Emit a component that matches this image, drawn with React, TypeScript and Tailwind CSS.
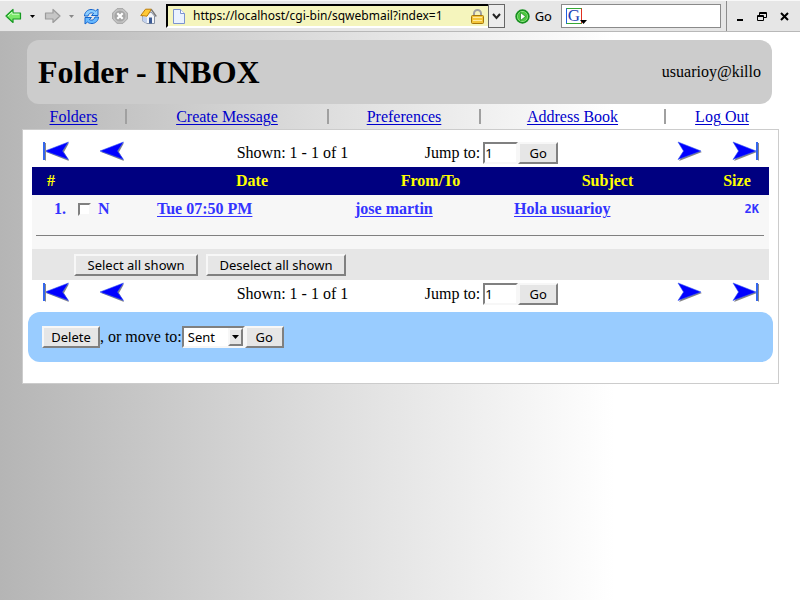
import React from "react";

const sans = "font-['Noto_Sans','Open_Sans',sans-serif] text-[13px] leading-[18px]";
const raised =
  "h-[22px] border-2 border-t-[#f7f7f7] border-l-[#f7f7f7] border-r-[#808080] border-b-[#808080] bg-[#e6e6e6] text-black whitespace-nowrap";
const sunken =
  "h-[22px] border-2 border-t-[#808080] border-l-[#808080] border-r-[#f7f7f7] border-b-[#f7f7f7] bg-white text-black";

function ArrowIcon({ back, stop }: { back?: boolean; stop?: boolean }) {
  const barX = back ? 2 : 25;
  return (
    <svg
      width={stop ? 28 : 26}
      height="21"
      viewBox={stop ? "0 0 28 21" : "0 0 26 21"}
      aria-hidden="true"
    >
      {back ? (
        <g transform={stop ? "translate(2 0)" : undefined}>
          <path d="M25 2 L2 11 L25 20 L20 11 Z" fill="#666666" opacity="0.8" />
          <path d="M24.5 1 L1 10 L24.5 18.5 L18.5 10 Z" fill="#0000ff" stroke="#3c5cf0" strokeWidth="0.6" />
        </g>
      ) : (
        <>
          <path d="M2 2 L25 11 L2 20 L8 11 Z" fill="#666666" opacity="0.8" />
          <path d="M1 1 L24 10 L1 18.5 L6.5 10 Z" fill="#0000ff" stroke="#3c5cf0" strokeWidth="0.6" />
        </>
      )}
      {stop && <path d={`M${barX} 1V19`} stroke="#3366ee" strokeWidth="2" />}
      {stop && <path d={`M${barX + 1.5} 2V19.5`} stroke="#888888" strokeWidth="1" />}
    </svg>
  );
}

function Pager({ id }: { id: string }) {
  return (
    <nav className="mx-[9px] grid h-[26px] grid-cols-[161px_1fr_1fr_178px]" aria-label={`Pages ${id}`}>
      <div className="flex items-start gap-[29px] pl-[10px]">
        <a href="#first" aria-label="First page"><ArrowIcon back stop /></a>
        <a href="#previous" aria-label="Previous page"><ArrowIcon back /></a>
      </div>
      <p className="text-center leading-6">Shown: 1 - 1 of 1</p>
      <form className="flex h-6 items-center justify-center" onSubmit={(e) => e.preventDefault()}>
        <label htmlFor={`jump-${id}`} className="mr-[3px] whitespace-nowrap">Jump to:</label>
        <input id={`jump-${id}`} defaultValue="1" className={`${sans} ${sunken} w-[35px]`} />
        <button type="submit" className={`${sans} ${raised} w-10`}>Go</button>
      </form>
      <div className="flex items-start justify-end gap-[29px] pr-[9px]">
        <a href="#next" aria-label="Next page"><ArrowIcon /></a>
        <a href="#last" aria-label="Last page"><ArrowIcon stop /></a>
      </div>
    </nav>
  );
}

function Caret({ color }: { color: string }) {
  return (
    <svg width="5" height="3" viewBox="0 0 5 3" aria-hidden="true">
      <path d="M0 0H5L2.5 3Z" fill={color} />
    </svg>
  );
}

function Toolbar() {
  return (
    <header className={`${sans} flex h-8 items-center border-t border-b border-t-[#f8f8f8] border-b-[#b8b8b8] bg-[#e6e6e6] pl-[5px] text-black`}>
      <button aria-label="Back" className="w-[18px]">
        <svg width="17" height="16" viewBox="0 0 17 16">
          <path d="M1 8 8 1.5V5H15.5V11H8V14.5Z" fill="#7be86a" stroke="#169a22" strokeWidth="1.2" strokeLinejoin="round" />
          <path d="M3 8 7 4.2V6.2H14.2" fill="none" stroke="#d2ffc8" />
        </svg>
      </button>
      <button aria-label="Back history" className="ml-[7px] w-[6px]"><Caret color="#000" /></button>
      <button aria-label="Forward" className="ml-[8px] w-[18px]">
        <svg width="17" height="16" viewBox="0 0 17 16">
          <path d="M16 8 9 1.5V5H1.5V11H9V14.5Z" fill="#c6c6c6" stroke="#9b9b9b" strokeWidth="1.2" strokeLinejoin="round" />
        </svg>
      </button>
      <button aria-label="Forward history" className="ml-[7px] w-[6px]"><Caret color="#888" /></button>
      <button aria-label="Reload" className="ml-[8px] w-[17px]">
        <svg width="17" height="17" viewBox="0 0 17 17">
          <path d="M1.5 8C1.5 4.5 4.5 1.5 8 1.5 10 1.5 11.5 2 12.5 3L15 1V7.5H8.5L10.7 5.4C8 4.2 6 5 5 8Z" fill="#8accff" stroke="#1464cc" strokeLinejoin="round" />
          <path d="M15.5 9C15.5 12.5 12.5 15.5 9 15.5 7 15.5 5.5 15 4.5 14L2 16V9.5H8.5L6.3 11.6C9 12.8 11 12 12 9Z" fill="#66b8ff" stroke="#1464cc" strokeLinejoin="round" />
        </svg>
      </button>
      <button aria-label="Stop" className="ml-[12px] w-4">
        <svg width="16" height="16" viewBox="0 0 16 16">
          <path d="M5 .7H11L15.3 5V11L11 15.3H5L.7 11V5Z" fill="#c4c4c4" stroke="#a0a0a0" />
          <circle cx="8" cy="8" r="5.6" fill="#a6a6a6" />
          <path d="M5.3 5.3 10.7 10.7M10.7 5.3 5.3 10.7" stroke="#fff" strokeWidth="2.2" />
        </svg>
      </button>
      <button aria-label="Home" className="ml-[12px] w-[17px]">
        <svg width="17" height="17" viewBox="0 0 17 17">
          <path d="M2.5 8V13L7 15.5H14.5V8L11 4Z" fill="#f4f6fa" stroke="#8792a4" />
          <path d="M2.5 8.5 7 9.5V15.5L2.5 13Z" fill="#c3d2ee" />
          <path d="M.8 7.5 5.5 1.2H11.5L7 8.2Z" fill="#ffc936" stroke="#bb7c0c" strokeLinejoin="round" />
          <path d="M11.3 1.5 16.3 8.5" stroke="#777" strokeWidth="1.3" />
          <rect x="9" y="9.5" width="3" height="6" fill="#3d5c96" />
        </svg>
      </button>

      <div className="ml-[9px] flex h-6 min-w-0 flex-1 items-center border-2 border-r-0 border-t-black border-b-white border-l-black bg-[#f5f5bd] pl-[5px]">
        <svg width="12" height="15" viewBox="0 0 12 15" className="shrink-0" aria-hidden="true">
          <path d="M.5.5H7.5L11.5 4.5V14.5H.5Z" fill="#eaf2ff" stroke="#7b93d0" />
          <path d="M7.5.5V4.5H11.5" fill="#fff" stroke="#7b93d0" />
        </svg>
        <input
          aria-label="Address"
          defaultValue="https://localhost/cgi-bin/sqwebmail?index=1"
          className="ml-[8px] min-w-0 flex-1 bg-transparent text-[12px]"
        />
        <svg width="13" height="15" viewBox="0 0 13 15" className="mr-[4px] shrink-0" aria-hidden="true">
          <path d="M3 7V4.5A3.5 3.5 0 0 1 10 4.5V7" fill="none" stroke="#a0a0a0" strokeWidth="2" />
          <rect x=".5" y="6.5" width="12" height="8" rx="1" fill="#f4c63a" stroke="#a87808" />
          <path d="M2 8.5H11M2 11.5H11" stroke="#ffeaa0" />
        </svg>
      </div>
      <button aria-label="Address history" className="flex h-6 w-[17px] items-center justify-center border border-[#666] bg-[#ececec]">
        <svg width="9" height="7" viewBox="0 0 9 7"><path d="M1 1 4.5 5 8 1" fill="none" stroke="#222" strokeWidth="2" /></svg>
      </button>
      <button className="ml-[10px] flex items-center gap-[5px]">
        <svg width="15" height="15" viewBox="0 0 15 15" aria-hidden="true">
          <circle cx="7.5" cy="7.5" r="6.3" fill="#a8ee98" stroke="#189020" strokeWidth="1.8" />
          <circle cx="7.5" cy="7.5" r="4.8" fill="#4cc840" />
          <path d="M5.5 3.5 10.5 7.5 5.5 11.5Z" fill="#fff" stroke="#12801a" strokeWidth=".7" />
        </svg>
        Go
      </button>
      <div className="ml-[9px] flex h-6 w-40 items-center border border-[#8a8a8a] bg-white pl-[4px]">
        <span className="flex size-4 shrink-0 items-center justify-center border border-t-[#35a835] border-r-[#e03020] border-b-[#35a835] border-l-[#2060e0] font-['Liberation_Serif',serif] text-[17px] leading-4 text-[#1a3fb4]">G</span>
        <span className="-ml-[2px] mt-3"><svg width="7" height="4" viewBox="0 0 7 4" aria-hidden="true"><path d="M0 0H7L3.5 4Z" /></svg></span>
        <input aria-label="Search" className="min-w-0 flex-1 bg-transparent" />
      </div>
      <div className="ml-[5px] flex h-[30px] items-center border-l border-[#8c8c8c] pl-[9px] pr-[11px]">
        <button aria-label="Minimize"><svg width="9" height="11" viewBox="0 0 9 11"><path d="M1 9H7" stroke="#000" strokeWidth="2" /></svg></button>
        <button aria-label="Restore" className="ml-[12px]">
          <svg width="10" height="9" viewBox="0 0 10 9"><path d="M2.5 3V.5H9.5V5.5H7M2.5 1.5H9.5M.5 3.5H6.5V8.5H.5ZM.5 4.5H6.5" fill="none" stroke="#000" /></svg>
        </button>
        <button aria-label="Close" className="ml-[13px]"><svg width="9" height="9" viewBox="0 0 9 9"><path d="M1 1 8 8M8 1 1 8" stroke="#000" strokeWidth="2" /></svg></button>
      </div>
    </header>
  );
}

const navLink = "text-[#0000cc] underline underline-offset-2";
const divided = "border-l-2 border-[#a0a0a0]";
const mailLink = "underline underline-offset-2";

export default function App() {
  return (
    <div className="min-h-screen bg-white bg-[linear-gradient(90deg,#b5b5b5_0px,#dedede_330px,#ffffff_615px)] font-['Liberation_Serif',serif] text-base leading-5 text-black">
      <Toolbar />
      <main className="mx-[22px] pt-2">
        <div className="ml-[5px] mr-[6px] flex h-16 items-center justify-between rounded-xl bg-[#cccccc] px-[11px]">
          <h1 className="pb-px text-[32px] leading-10 font-bold">Folder - INBOX</h1>
          <p>usuarioy@killo</p>
        </div>
        <nav className="grid h-[25px] grid-cols-[103fr_202fr_152fr_185fr_114fr] items-center text-center leading-[15px]">
          <div><a href="#folders" className={navLink}>Folders</a></div>
          <div className={divided}><a href="#create" className={navLink}>Create Message</a></div>
          <div className={divided}><a href="#preferences" className={navLink}>Preferences</a></div>
          <div className={divided}><a href="#addresses" className={navLink}>Address Book</a></div>
          <div className={divided}><a href="#logout" className={navLink}>Log Out</a></div>
        </nav>

        <section className="-mr-px border border-[#cccccc] bg-white pt-[11px] pb-[21px]">
          <Pager id="top" />
          <div className="mx-[9px]">
            <table className="w-full table-fixed border-collapse font-bold">
              <colgroup>
                <col className="w-[38px]" />
                <col className="w-[83px]" />
                <col className="w-[198px]" />
                <col className="w-[159px]" />
                <col />
                <col className="w-16" />
              </colgroup>
              <thead>
                <tr className="h-7 bg-[#000080] text-[#ffff00]">
                  <th>#</th>
                  <th aria-label="Status" />
                  <th>Date</th>
                  <th>From/To</th>
                  <th>Subject</th>
                  <th>Size</th>
                </tr>
              </thead>
              <tbody className="bg-[#f7f7f7] text-[#3333ff]">
                <tr className="h-7">
                  <td className="pr-1 text-right">1.</td>
                  <td className="pl-2">
                    <label className="flex items-center gap-[7px]">
                      <input type="checkbox" className="size-[13px] appearance-none border-2 border-t-[#808080] border-r-[#f7f7f7] border-b-[#f7f7f7] border-l-[#808080] bg-white" />
                      N
                    </label>
                  </td>
                  <td className="pl-1"><a href="#message" className={mailLink}>Tue 07:50 PM</a></td>
                  <td className="pl-1"><a href="#message" className={mailLink}>jose martin</a></td>
                  <td className="pl-1"><a href="#message" className={mailLink}>Hola usuarioy</a></td>
                  <td className="pr-[10px] text-right font-['DejaVu_Sans_Mono',monospace] text-[12px]">2K</td>
                </tr>
                <tr className="h-[26px]">
                  <td colSpan={6} className="px-1 pb-[2px]">
                    <hr className="mr-px border-t border-[#808080]" />
                  </td>
                </tr>
              </tbody>
            </table>
            <div className="flex h-[31px] items-center gap-[8px] bg-[#e6e6e6] pl-[42px]">
              <button className={`${sans} ${raised} w-[124px]`}>Select all shown</button>
              <button className={`${sans} ${raised} w-[140px]`}>Deselect all shown</button>
            </div>
          </div>
          <div className="pt-[2px]">
            <Pager id="bottom" />
          </div>
          <form className="mt-1 ml-[5px] mr-[5px] flex h-[50px] items-center rounded-xl bg-[#99ccff] pl-[14px]" onSubmit={(e) => e.preventDefault()}>
            <button type="button" className={`${sans} ${raised} w-[58px]`}>Delete</button>
            <label htmlFor="target" className="whitespace-nowrap">, or move to:</label>
            <span className={`${sunken} grid w-[63px] items-center bg-white`}>
              <select id="target" className={`${sans} col-start-1 row-start-1 appearance-none pl-1`}>
                <option>Sent</option>
              </select>
              <span className="pointer-events-none col-start-1 row-start-1 flex h-[18px] w-[15px] items-center justify-center justify-self-end border-2 border-t-[#f7f7f7] border-r-[#808080] border-b-[#808080] border-l-[#f7f7f7] bg-[#e6e6e6]">
                <svg width="7" height="4" viewBox="0 0 7 4" className="shrink-0" aria-hidden="true"><path d="M0 0H7L3.5 4Z" /></svg>
              </span>
            </span>
            <button type="submit" className={`${sans} ${raised} w-[39px]`}>Go</button>
          </form>
        </section>
      </main>
    </div>
  );
}
